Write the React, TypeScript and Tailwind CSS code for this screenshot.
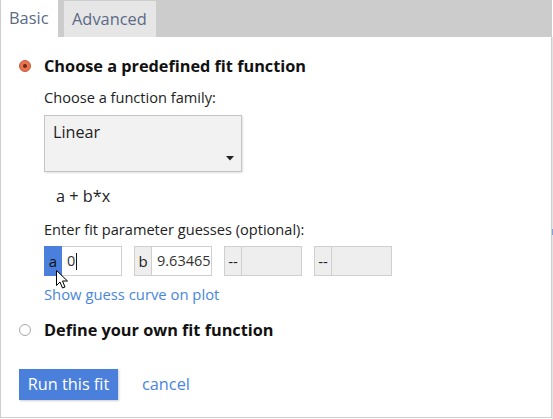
import React from "react";

function ParamGroup({ label, value, active, disabled, caret }: { label: string; value?: string; active?: boolean; disabled?: boolean; caret?: boolean }) {
  return (
    <div className="flex h-[30px]">
      <div
        className={
          active
            ? "w-[18px] h-full flex items-center justify-center bg-[#4a7fdc] text-[#111] border border-[#4a7fdc] text-[15px]"
            : "w-[18px] h-full flex items-center justify-center bg-[#eeeeee] text-[#222] border border-[#cfcfcf] text-[15px]"
        }
      >
        {label}
      </div>
      <div
        className={
          disabled
            ? "w-[60px] h-full bg-[#eeeeee] border border-l-0 border-[#cfcfcf]"
            : "w-[60px] h-full bg-white border border-l-0 border-[#cfcfcf] flex items-center pl-[5px] text-[14.5px] text-[#333] overflow-hidden whitespace-nowrap"
        }
      >
        {value}
        {caret ? <span className="inline-block w-px h-[17px] bg-[#111] ml-px" /> : null}
      </div>
    </div>
  );
}

export default function App() {
  return (
    <div className="relative w-[553px] h-[419px] bg-white overflow-hidden" style={{ fontFamily: '"Open Sans", sans-serif' }}>
      <div className="absolute right-0 top-[37px] w-px h-[382px] bg-[#e4e4e4]" />
      <div className="absolute right-0 top-[229px] w-px h-[6px] bg-[#7fa3d8]" />
      <div className="w-[552px] h-[418px] border-l border-r border-b border-[#cccccc] flex flex-col">
        <div className="h-[37px] bg-[#cccccc] flex items-end gap-[6px]">
          <div className="w-[57px] h-[37px] bg-white pl-[8px] flex items-center text-[16.4px] text-[#5b6a85]">Basic</div>
          <div className="w-[92px] h-[36px] bg-[#e6e6e6] pl-[8px] flex items-center text-[16.4px] text-[#5b6a85]">Advanced</div>
        </div>
        <div className="pt-[17px] pl-[18px]">
          <div className="flex items-center h-[24px]">
            <div className="w-[12px] h-[12px] rounded-full bg-[#e8734f] border border-[#c9583a] flex items-center justify-center">
              <div className="w-[4px] h-[4px] rounded-full bg-[#6b2a1c]" />
            </div>
            <div className="ml-[13px] text-[16.3px] font-bold text-[#111]">Choose a predefined fit function</div>
          </div>
          <div className="pl-[25px]">
            <div className="mt-[9px] text-[14.6px] text-[#222] h-[20px] leading-[20px]">Choose a function family:</div>
            <div className="mt-[8px] w-[198px] h-[57px] bg-[#f2f2f2] border border-[#c4c4c4] shadow-[1px_1px_2px_rgba(0,0,0,0.12)] relative">
              <div className="absolute left-[8px] top-[4px] text-[16.2px] text-[#222]">Linear</div>
              <svg className="absolute left-[181px] top-[40px]" width="8" height="5" viewBox="0 0 8 5">
                <path d="M0 0 L8 0 L4 4.5 Z" fill="#222" />
              </svg>
            </div>
            <div className="mt-[14px] ml-[12px] text-[16.3px] text-[#222] h-[20px] leading-[20px]">a + b*x</div>
            <div className="mt-[13px] text-[14.6px] text-[#222] h-[20px] leading-[20px]">Enter fit parameter guesses (optional):</div>
            <div className="mt-[7px] flex gap-[12px]">
              <ParamGroup label="a" value="0" active caret />
              <ParamGroup label="b" value="9.634651" />
              <ParamGroup label="--" disabled />
              <ParamGroup label="--" disabled />
            </div>
            <div className="mt-[8px] text-[14.8px] text-[#4a86e0] h-[20px] leading-[20px]">Show guess curve on plot</div>
          </div>
          <div className="mt-[14px] flex items-center h-[24px]">
            <div className="w-[12px] h-[12px] rounded-full bg-white border border-[#a8a8a8]" />
            <div className="ml-[13px] text-[16.3px] font-bold text-[#111]">Define your own fit function</div>
          </div>
        </div>
        <div className="mt-[27px] pl-[18px] flex items-center">
          <div className="w-[99px] h-[31px] bg-[#4a7fdc] text-white text-[16.3px] flex items-center justify-center shadow-[1px_1px_2px_rgba(0,0,0,0.2)]">Run this fit</div>
          <div className="ml-[24px] text-[16.3px] text-[#4a86e0]">cancel</div>
        </div>
      </div>
      <svg className="absolute left-[56px] top-[270px]" width="13" height="20" viewBox="0 0 13 20">
        <path d="M0.5 0.5 L0.5 15.5 L4 12 L6.5 18 L9 17 L6.5 11 L11.5 11 Z" fill="white" stroke="black" strokeWidth="1" strokeLinejoin="round" />
      </svg>
    </div>
  );
}
